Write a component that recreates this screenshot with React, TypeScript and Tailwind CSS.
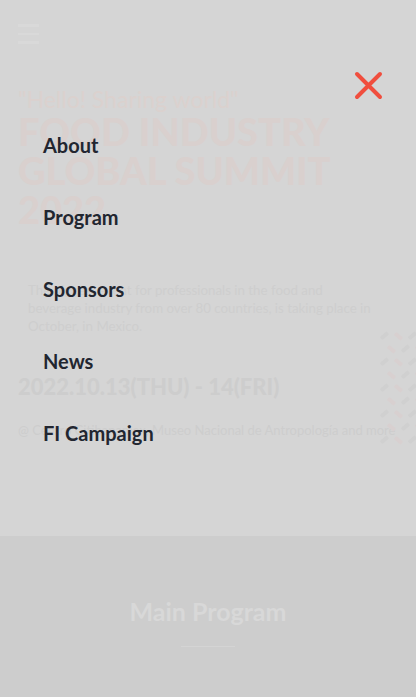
import React from "react";

const menu = ["About", "Program", "Sponsors", "News", "FI Campaign"];

function Dashes() {
  const items: { x: number; y: number; c: string }[] = [];
  for (let r = 0; r < 9; r++) {
    for (let c = 0; c < 3; c++) {
      items.push({ x: 8 + c * 14 + (r % 2) * 7, y: 6 + r * 13, c: (r + c) % 2 ? "#d8d0d0" : "#d0d0d0" });
    }
  }
  return (
    <svg width="44" height="120" viewBox="0 0 44 120" className="absolute right-0 top-[328px]">
      {items.map((d, i) => (
        <rect key={i} x={d.x} y={d.y} width="9" height="4" rx="1" fill={d.c} transform={`rotate(${i % 2 ? 40 : -40} ${d.x + 4} ${d.y + 2})`} />
      ))}
    </svg>
  );
}

export default function App() {
  return (
    <div className="relative w-full h-[697px] overflow-hidden bg-[#d5d5d5]" style={{ fontFamily: "Lato, 'Noto Sans', sans-serif" }}>
      {/* underlying page, dimmed by the open menu */}
      <div className="flex flex-col px-[18px] pt-[24px] h-[536px]">
        <div className="flex flex-col gap-[6px] w-[21px]">
          <div className="h-[2.5px] bg-[#d9d9d9]" />
          <div className="h-[2.5px] bg-[#d9d9d9]" />
          <div className="h-[2.5px] bg-[#d9d9d9]" />
        </div>
        <p className="mt-[44px] text-[23px] leading-[23px] text-[#dbd1ce]">"Hello! Sharing world"</p>
        <h1 className="mt-[1px] text-[38px] leading-[39px] font-black text-[#d9d0ce]">
          FOOD INDUSTRY
          <br />
          GLOBAL SUMMIT
          <br />
          2022
        </h1>
        <p className="mt-[52px] ml-[10px] w-[345px] text-[13.3px] leading-[18px] text-[#cecece]">
          The biggest event for professionals in the food and beverage industry from over 80 countries, is taking place in October, in Mexico.
        </p>
        <p className="mt-[39px] text-[22px] leading-[26px] font-black text-[#cdcdcd]">2022.10.13(THU) - 14(FRI)</p>
        <p className="mt-[20px] text-[13px] leading-[20px] text-[#cdcdcd] whitespace-nowrap">@ Centro Citibanamex, Museo Nacional de Antropología and more</p>
      </div>
      <Dashes />
      <div className="flex flex-col items-center h-[161px] bg-[#cdcdcd] pt-[59px]">
        <h2 className="text-[25px] leading-[32px] font-bold text-[#d8d8d8]">Main Program</h2>
        <div className="mt-[19px] w-[54px] h-px bg-[#d4d4d4]" />
      </div>

      {/* open menu */}
      <div className="absolute inset-0">
        <button className="absolute left-[354px] top-[71px] w-[29px] h-[29px] flex items-center justify-center">
          <svg width="29" height="29" viewBox="0 0 29 29">
            <path d="M3 3 L26 26 M26 3 L3 26" stroke="#f04e3e" strokeWidth="4" strokeLinecap="round" />
          </svg>
        </button>
        <nav className="flex flex-col pl-[43px] pt-[131px]">
          {menu.map((m) => (
            <a key={m} className="h-[72px] text-[20px] leading-[28px] font-bold text-[#222630]">
              {m}
            </a>
          ))}
        </nav>
      </div>
    </div>
  );
}
